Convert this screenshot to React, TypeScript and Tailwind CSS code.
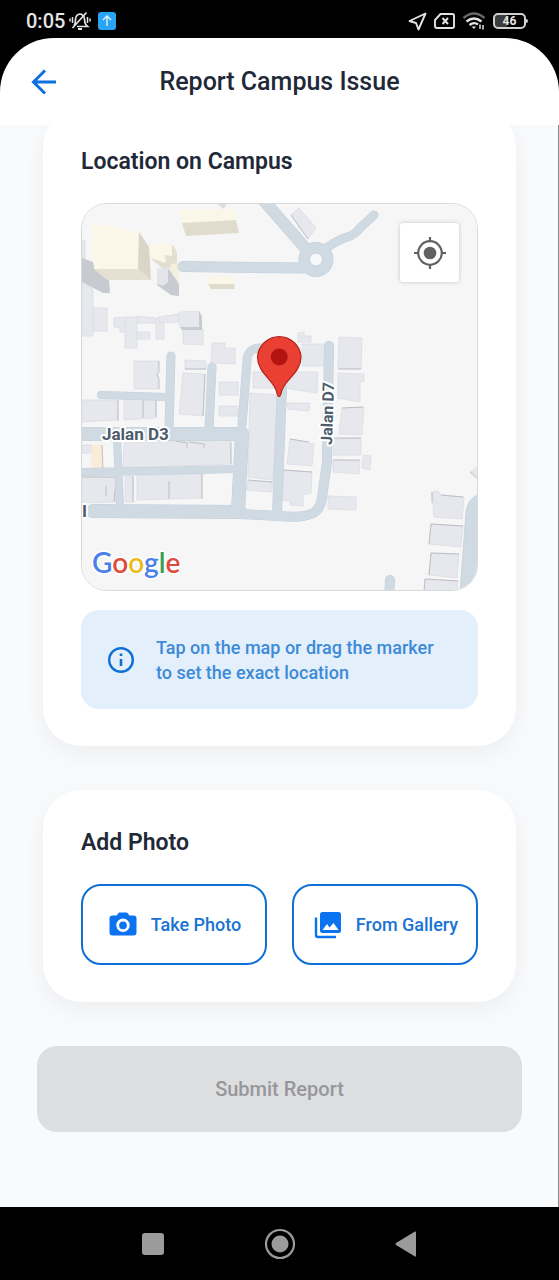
const ROAD = "#d0dae3";
const CASING = "#c3d0db";

type Road = { d: string; w: number };

const roads: Road[] = [
  { d: "M183 266.500 L304 268", w: 10 },
  { d: "M258 194 L308 251", w: 11 },
  { d: "M328 247 Q338 240 347 237 Q355 235 360 228 L374 215", w: 8 },
  { d: "M171 356 L169 428", w: 8 },
  { d: "M101 395 L168 397", w: 7 },
  { d: "M212 367 L209 428", w: 8 },
  { d: "M262 348 Q247 347 247 362 L242 425", w: 8 },
  { d: "M78 434 L242 434", w: 13 },
  { d: "M117 438 L120 508", w: 7 },
  { d: "M78 472 L150 471 L237 469", w: 7 },
  { d: "M242 434 L238 511", w: 13 },
  { d: "M93 511 L240 512", w: 13 },
  { d: "M240 514 L280 516 Q302 518 311 514 Q320 511 322 498 L327 462 L329 346", w: 9 },
  { d: "M282 388 L277 514", w: 9 },
  { d: "M390 580 L389 600", w: 9 },
];

const buildings: string[] = [
  "82,241 85,241 85,260 82,260",
  "82,281 93,289 93,336 82,336",
  "93,308 107,308 107,331 93,331",
  "114,318 125,317 125,332 120,332 120,328 114,327",
  "137,316 155,318 155,323 137,323",
  "125,317 137,317 137,348 125,348",
  "137,332 150,332 150,339 137,339",
  "156,318 164,319 164,339 156,339",
  "158,317 179,314 179,322 160,323",
  "183,329 203,329 203,345 183,344",
  "212,343 225,343 225,348 235,348 235,364 211,363",
  "134,361 159,361 157,374 159,389 134,389",
  "185,360 206,361 206,369 185,369",
  "183,373 205,374 203,416 179,414",
  "219,382 238,382 238,395 219,395",
  "219,406 238,406 238,416 219,416",
  "82,400 118,400 118,420 82,422",
  "124,398 156,398 156,418 124,420",
  "124,443 230,440 231,464 123,468",
  "82,445 92,445 92,453 82,453",
  "82,477 116,477 115,502 82,503",
  "125,476 133,476 133,502 125,502",
  "137,475 202,474 202,498 137,500",
  "250,393 277,395 273,480 248,477",
  "248,481 272,482 272,492 246,490",
  "253,372 277,372 277,388 253,388",
  "298,333 304,332 304,336 311,336 311,342 298,342",
  "302,344 326,344 326,366 302,366",
  "339,337 362,338 361,369 338,368",
  "284,372 318,372 317,393 284,388",
  "338,373 364,374 364,381 360,382 360,402 338,398",
  "287,403 310,403 309,411 288,409",
  "342,408 364,407 362,435 339,434",
  "334,439 361,438 361,455 333,455",
  "333,460 360,461 359,474 333,472",
  "363,455 371,456 370,470 362,468",
  "290,439 314,444 312,466 287,464",
  "284,470 312,472 311,493 303,495 303,506 290,505 290,501 282,500",
  "328,496 356,497 356,510 328,509",
  "432,492 438,491 440,495 464,497 462,519 434,517",
  "431,524 463,526 461,547 429,544",
  "431,553 459,554 457,578 429,575",
  "425,579 458,581 457,592 424,592",
  "291,215 299,208 316,228 308,239",
  "470,472 478,466 478,477",
];

const shadows: string[] = [
  "M159 361 V372 L157 375 L159 378 V389",
  "M118 400 V421",
  "M156 399 V417",
  "M143 399 V418",
  "M231 442 V464",
  "M176 441 L187 443 V448 M189 442 L204 444 V448",
  "M116 478 L114 502 M106 486 V496",
  "M133 476 V502",
  "M202 474 V499 M169 481 V499",
  "M82 477 H116",
  "M248 480 L273 482",
  "M185 369 H206",
  "M205 374 L203 416",
  "M291 215 L308 239",
  "M338 369 H361",
  "M290 439 L309 442",
  "M283 470 L312 472",
  "M333 460 H360",
  "M334 438 H361",
  "M342 408 L363 407",
  "M441 495 L463 497 M432 492 V503",
  "M429 544 L431 524 L463 526",
  "M429 575 L431 553 L459 554",
  "M424 592 L425 579 L458 581",
  "M470 472 L478 479",
];

function CampusMap() {
  return (
    <svg
      viewBox="82 204 395 386"
      preserveAspectRatio="xMidYMid slice"
      className="block h-full w-full"
      role="img"
      aria-label="Campus map"
    >
      <rect x="0" y="0" width="700" height="800" fill="#f6f6f6" />
      <g fill="#e7e8ee" stroke="#dcdde5" strokeWidth="0.800">
        {buildings.map((p) => (
          <polygon key={p} points={p} />
        ))}
      </g>
      <g fill="none" stroke="#b9babf" strokeWidth="0.900">
        {shadows.map((d) => (
          <path key={d} d={d} />
        ))}
      </g>

      {/* raised buildings */}
      <polygon points="82,258 93,262 95,269 109,280 110,293 103,293 82,282" fill="#c8cad2" />
      <polygon points="91,224 110,226 139,232 138,269 94,269" fill="#faf6e8" />
      <polygon points="94,269 138,269 151,280 107,280" fill="#e5e0d1" />
      <polygon points="139,232 149,247 151,280 138,269" fill="#dad5c6" />
      <polygon points="178,210 235,209 236,220 182,223" fill="#faf6e8" />
      <polygon points="182,223 236,220 239,233 186,236" fill="#e0dccd" />
      <polygon points="218,204 227,204 223,209" fill="#dcdde2" />
      <polygon points="157,268 168,268 179,283 179,296 171,295 157,285" fill="#c9cbd3" />
      <polygon points="157,268 168,268 168,282 163,286 157,284" fill="#e4e5ec" />
      <polygon points="150,244 172,244 177,252 177,263 170,268 162,268 150,258" fill="#e3decf" />
      <polygon points="150,244 172,244 172,256 165,255 166,263 150,258" fill="#faf6e8" />
      <polygon points="171,264 179,263 179,284 170,270" fill="#f5f0de" />
      <polygon points="205,276 233,276 234,284 208,284" fill="#faf6e8" />
      <polygon points="208,284 234,284 235,289 211,289" fill="#e0dccd" />
      <polygon points="178,312 199,311 202,316 202,330 182,330 179,326" fill="#c9cbd3" />
      <polygon points="178,312 199,311 199,327 179,327" fill="#e7e8ee" />
      <polygon points="92,445 102,445 103,470 91,467" fill="#f9ecd9" />
      <path d="M102 445 L103 470 L97 468" fill="none" stroke="#c9c0b0" />

      {/* streets */}
      <g fill="none" stroke={CASING} strokeLinecap="round" strokeLinejoin="round">
        {roads.map((r) => (
          <path key={r.d} d={r.d} strokeWidth={r.w + 1} />
        ))}
      </g>
      <circle cx="316" cy="259.500" r="17.500" fill={CASING} />
      <g fill="none" stroke={ROAD} strokeLinecap="round" strokeLinejoin="round">
        {roads.map((r) => (
          <path key={r.d} d={r.d} strokeWidth={r.w} />
        ))}
      </g>
      <circle cx="316" cy="259.500" r="17" fill={ROAD} />
      <circle cx="316" cy="259.500" r="6.500" fill="#f8f8f8" stroke={CASING} />
      <path d="M460 592 L466 512 Q468 498 478 495 V592 Z" fill={ROAD} stroke={CASING} strokeWidth="0.800" />

      <g
        fontFamily="Roboto, sans-serif"
        fontWeight="700"
        fill="#4c5c6b"
        stroke="#ffffff"
        strokeWidth="4"
        strokeLinejoin="round"
        paintOrder="stroke"
      >
        <text x="102" y="440" fontSize="17">
          Jalan D3
        </text>
        <text transform="translate(332 445) rotate(-88)" fontSize="16">
          Jalan D7
        </text>
        <text x="82" y="517" fontSize="17" textAnchor="start">
          I
        </text>
      </g>

      <g stroke="#ffffff" strokeWidth="3" strokeLinejoin="round" paintOrder="stroke">
        <text x="92" y="573" fontFamily="Lato, sans-serif" fontWeight="600" fontSize="28">
          <tspan fill="#4a80e8">G</tspan>
          <tspan fill="#dd4b3e">o</tspan>
          <tspan fill="#e8bd1c">o</tspan>
          <tspan fill="#4a80e8">g</tspan>
          <tspan fill="#3a9d55">l</tspan>
          <tspan fill="#dd4b3e">e</tspan>
        </text>
      </g>

      {/* marker */}
      <path
        d="M279 396.500 C277.500 396.500 277 394 276.500 391.500 C274 380 257.500 373 257.500 357 A21.800 21.800 0 0 1 301 357 C301 373 284 380 281.500 391.500 C281 394 280.500 396.500 279 396.500 Z"
        fill="#ea4033"
        stroke="#b3251c"
        strokeWidth="1.200"
      />
      <circle cx="279.200" cy="357" r="8.500" fill="#b31412" />
    </svg>
  );
}

function StatusBar() {
  return (
    <div className="flex h-[38px] items-center justify-between bg-black pr-[31px] pl-[26px] pt-1 text-[#e4e4e4]">
      <div className="flex items-center">
        <span className="text-[20px] leading-6 font-medium">0:05</span>
        <svg className="ml-[3px] h-5 w-6" viewBox="0 0 24 20" fill="none" stroke="currentColor" strokeWidth="1.700" aria-hidden="true">
          <path d="M6 14.500 Q7.500 13 7.500 8 Q8 3.500 12 3 Q16 3.500 16.500 8 Q16.500 13 19.500 15.500 H9" />
          <path d="M10 18 H14" strokeWidth="2" />
          <path d="M18.500 1.500 L4.500 17" />
          <path d="M4.500 6 V12 M2 7.500 V10.500 M19.500 6 V12 M22 7.500 V10.500" strokeWidth="1.500" />
        </svg>
        <svg className="ml-[6px] h-[18px] w-[18px]" viewBox="0 0 18 18" aria-hidden="true">
          <rect width="18" height="18" rx="3" fill="#2aa5f5" />
          <path d="M9 14 V4.500 M5 8 L9 4 L13 8" fill="none" stroke="#e6f5ff" strokeWidth="1.300" />
        </svg>
      </div>
      <div className="flex items-center gap-[7px]">
        <svg className="h-[19px] w-[19px]" viewBox="0 0 19 19" fill="none" stroke="currentColor" strokeWidth="1.900" strokeLinejoin="round" aria-hidden="true">
          <path d="M17.500 1.500 L1.500 9 L8 11 L10.500 17.500 Z" />
        </svg>
        <svg className="h-[18px] w-[21px]" viewBox="0 0 21 18" fill="none" stroke="currentColor" strokeWidth="1.900" strokeLinejoin="round" aria-hidden="true">
          <path d="M6.500 2 H18 Q20 2 20 3.500 V14.500 Q20 16 18 16 H3 Q1 16 1 14 V8 Z" />
          <path d="M8.500 6 L14 12 M14 6 L8.500 12" strokeWidth="2" />
        </svg>
        <svg className="h-[19px] w-6" viewBox="0 0 24 19" fill="none" stroke="currentColor" strokeWidth="2.400" aria-hidden="true">
          <path d="M1.500 6 Q12 -3 22.500 6" stroke="#6a6a6a" />
          <path d="M4.500 9.500 Q12 3.500 19.500 9.500" />
          <path d="M7.500 13 Q12 9.500 16 12.500" />
          <path d="M9.500 14.500 H14 L12 17 Z" fill="currentColor" stroke="none" />
          <path d="M18 12.500 V17 M21 13 V17.500" strokeWidth="1.500" />
        </svg>
        <div className="flex items-center">
          <div className="flex h-4 w-[33px] items-center justify-center rounded-[5px] border-2 border-[#d0d0d0] bg-linear-to-r from-[#3c3c3c] from-40% to-black to-40% text-[12px] leading-3 font-bold">
            46
          </div>
          <div className="h-1 w-[2px] rounded-r bg-[#d0d0d0]" />
        </div>
      </div>
    </div>
  );
}

function Card({ title, children }: { title: string; children: React.ReactNode }) {
  return (
    <section className="mx-[6px] rounded-[38px] bg-white px-[38px] pt-[39px] pb-[37px] shadow-[0_8px_24px_rgba(0,0,0,0.05)]">
      <h2 className="mb-[27px] text-[23px] leading-7 font-semibold text-[#1f2937]">{title}</h2>
      {children}
    </section>
  );
}

export default function App() {
  return (
    <div className="flex min-h-screen flex-col bg-black font-[Roboto,sans-serif]">
      <StatusBar />

      <header className="relative z-10 flex h-[87px] items-center rounded-t-[54px] bg-white px-[30px]">
        <button type="button" aria-label="Back" className="flex h-7 w-7 items-center text-[#0d6fe0]">
          <svg className="h-7 w-7" viewBox="0 0 28 28" fill="none" stroke="currentColor" strokeWidth="3" aria-hidden="true">
            <path d="M26 14 H3 M15 2.500 L3.500 14 L15 25.500" />
          </svg>
        </button>
        <h1 className="flex-1 pr-7 text-center text-[25px] leading-8 font-medium text-[#1f2937]">
          Report Campus Issue
        </h1>
      </header>

      <main className="flex flex-1 flex-col overflow-hidden border-r border-[#8a8a8a] bg-[#f9fafc] pr-9 pb-[74px] pl-[37px]">
        <div className="-mt-4 flex flex-col gap-11">
          <Card title="Location on Campus">
            <div className="relative aspect-[397/388] w-full overflow-hidden rounded-[26px] border border-[#d9dadc]">
              <CampusMap />
              <button
                type="button"
                aria-label="My location"
                className="absolute top-[19px] right-[18px] flex h-[59px] w-[59px] items-center justify-center rounded-[3px] bg-white text-[#616161] shadow-[0_0_4px_rgba(0,0,0,0.2)]"
              >
                <svg className="h-[34px] w-[34px]" viewBox="0 0 34 34" fill="none" stroke="currentColor" strokeWidth="2.200" aria-hidden="true">
                  <circle cx="17" cy="17" r="11.800" />
                  <circle cx="17" cy="17" r="6.300" fill="currentColor" stroke="none" />
                  <path d="M17 1 V5.500 M17 28.500 V33 M1 17 H5.500 M28.500 17 H33" />
                </svg>
              </button>
            </div>
            <div className="mt-[19px] flex min-h-[99px] items-center gap-5 rounded-[18px] bg-[#e3effb] px-[25px] py-6">
              <svg className="h-[30px] w-[30px] shrink-0 text-[#0d6fd4]" viewBox="0 0 30 30" fill="none" stroke="currentColor" strokeWidth="2.400" aria-hidden="true">
                <circle cx="15" cy="15" r="11.800" />
                <path d="M15 14 V21" strokeWidth="2.600" />
                <path d="M15 8.500 V11" strokeWidth="2.600" />
              </svg>
              <p className="text-[18px] leading-[25px] font-medium text-[#3d8ad8]">
                Tap on the map or drag the marker to set the exact location
              </p>
            </div>
          </Card>

          <Card title="Add Photo">
            <div className="grid grid-cols-2 gap-[25px] text-[18px] leading-6 font-medium text-[#1a73d2]">
              <button type="button" className="flex h-[81px] items-center justify-center gap-3 rounded-[20px] border-2 border-[#0f6fd6]">
                <svg className="h-8 w-8" viewBox="0 0 32 32" aria-hidden="true">
                  <path
                    d="M12 3.500 H20 L22.500 6.500 H26.500 Q29.500 6.500 29.500 9.500 V23.500 Q29.500 26.500 26.500 26.500 H5.500 Q2.500 26.500 2.500 23.500 V9.500 Q2.500 6.500 5.500 6.500 H9.500 Z"
                    fill="#0b72f0"
                  />
                  <circle cx="16" cy="16.300" r="5.300" fill="none" stroke="#ffffff" strokeWidth="2.800" />
                </svg>
                Take Photo
              </button>
              <button type="button" className="flex h-[81px] items-center justify-center gap-3 rounded-[20px] border-2 border-[#0f6fd6]">
                <svg className="h-8 w-8" viewBox="0 0 32 32" aria-hidden="true">
                  <rect x="8" y="3" width="21" height="21" rx="2.500" fill="#0b72f0" />
                  <path d="M4 8.500 V26 Q4 28 6 28 H24" fill="none" stroke="#0b72f0" strokeWidth="2.400" />
                  <path d="M10.500 21 L15 15 L17.500 18.500 L21.500 14 L26.500 21 Z" fill="#ffffff" />
                </svg>
                From Gallery
              </button>
            </div>
          </Card>

          <button
            type="button"
            disabled
            className="h-[86px] w-full rounded-[20px] bg-[#dddee0] text-[20px] leading-6 font-medium text-[#96979a]"
          >
            Submit Report
          </button>
        </div>
      </main>

      <nav aria-label="System navigation" className="flex h-[73px] items-center justify-center gap-[95px] bg-black text-[#9b9b9b]">
        <button type="button" aria-label="Recent apps">
          <svg className="h-8 w-8" viewBox="0 0 32 32" fill="currentColor" aria-hidden="true">
            <rect x="5" y="5" width="22" height="22" rx="3" />
          </svg>
        </button>
        <button type="button" aria-label="Home">
          <svg className="h-8 w-8" viewBox="0 0 32 32" fill="currentColor" aria-hidden="true">
            <circle cx="16" cy="16" r="14" fill="none" stroke="currentColor" strokeWidth="2.200" />
            <circle cx="16" cy="16" r="8.500" />
          </svg>
        </button>
        <button type="button" aria-label="Back to previous screen">
          <svg className="h-8 w-8" viewBox="0 0 32 32" fill="currentColor" aria-hidden="true">
            <path d="M24 3.500 Q25 3 25 4.500 V27.500 Q25 29 24 28.500 L5 17 Q4 16 5 15 Z" />
          </svg>
        </button>
      </nav>
    </div>
  );
}
